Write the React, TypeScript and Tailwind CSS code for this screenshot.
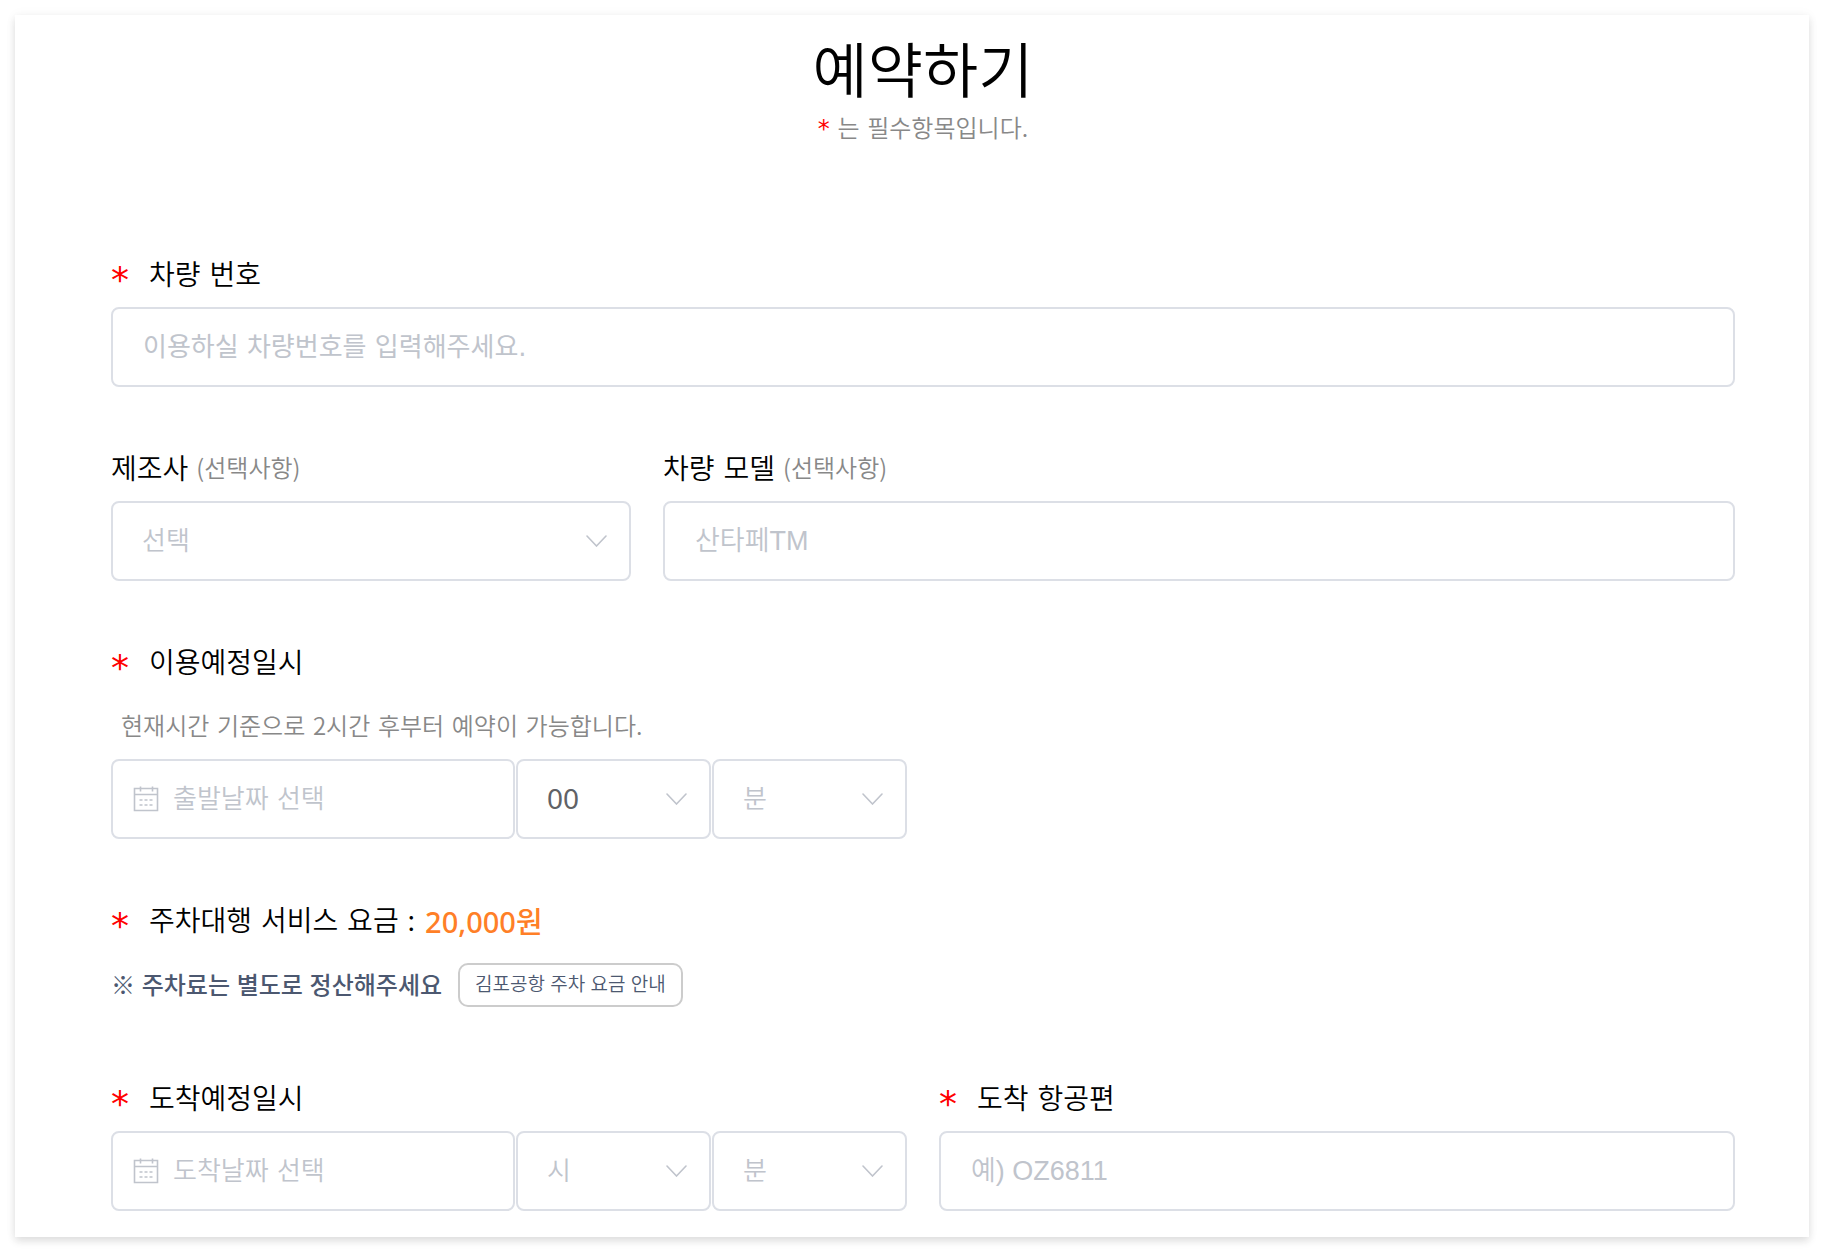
import { useState, type ReactNode } from "react";

const BOX =
  "h-20 w-full rounded-lg border-2 border-[#dcdfe6] bg-white text-[#606266] outline-none placeholder:text-[#c0c4cc] placeholder:opacity-100 focus:border-[#409eff]";

function Chevron() {
  return (
    <svg
      className="pointer-events-none absolute right-6 top-1/2 h-3 w-[21px] -translate-y-1/2"
      viewBox="0 0 21 12"
      fill="none"
      stroke="#c0c4cc"
      strokeWidth="1.6"
      strokeLinecap="round"
      aria-hidden="true"
    >
      <path d="M1 1l9.5 10L20 1" />
    </svg>
  );
}

function CalendarIcon() {
  return (
    <svg
      className="pointer-events-none absolute left-[21px] top-1/2 h-7 w-7 -translate-y-1/2"
      viewBox="0 0 28 28"
      fill="none"
      stroke="#c0c4cc"
      strokeWidth="1.6"
      aria-hidden="true"
    >
      <path d="M2.5 3.5h23v22h-23zM2.5 9.5h23" />
      <path d="M8.5 1.5v5M20.5 1.5v5" />
      <path d="M7.5 15h3M12.5 15h3M17.5 15h3M7.5 20h3M12.5 20h3M17.5 20h3" />
    </svg>
  );
}

function Star() {
  return (
    <span
      className="mr-5 h-10 w-[18px] pt-[7px] font-['DejaVu_Sans',sans-serif] text-4xl font-normal leading-10 text-[#ff0000]"
      aria-hidden="true"
    >
      *
    </span>
  );
}

function Plain({ children }: { children: ReactNode }) {
  return <span className="font-['Noto_Sans_CJK_KR',sans-serif] leading-none">{children}</span>;
}

function Label({
  htmlFor,
  required,
  hint,
  children,
}: {
  htmlFor?: string;
  required?: boolean;
  hint?: string;
  children: ReactNode;
}) {
  return (
    <label htmlFor={htmlFor} className="mb-3.5 flex h-10 items-center text-[28px] leading-10 text-black">
      {required && <Star />}
      <span className="pt-1.5">{children}</span>
      {hint && <span className="ml-2 font-['Noto_Sans_CJK_KR',sans-serif] text-2xl text-[#888888]">{hint}</span>}
    </label>
  );
}

function Select({
  id,
  label,
  placeholder,
  options,
  initial = "",
}: {
  id: string;
  label: string;
  placeholder: string;
  options: string[];
  initial?: string;
}) {
  const [value, setValue] = useState(initial);
  return (
    <div className="relative">
      <select
        id={id}
        aria-label={label}
        value={value}
        onChange={(e) => setValue(e.target.value)}
        className={`${BOX} appearance-none pb-0.5 pl-[29px] pr-14 font-['Noto_Sans','Noto_Sans_CJK_KR',sans-serif] ${
          value === "" ? "text-[26px] text-[#c0c4cc]!" : "text-[28px] font-normal"
        }`}
      >
        <option value="">{placeholder}</option>
        {options.map((o) => (
          <option key={o}>{o}</option>
        ))}
      </select>
      <Chevron />
    </div>
  );
}

const HOURS = Array.from({ length: 24 }, (_, i) => String(i).padStart(2, "0"));
const MINUTES = ["00", "10", "20", "30", "40", "50"];

function DateTime({ id, placeholder, hour }: { id: string; placeholder: string; hour?: string }) {
  return (
    <div className="grid grid-cols-[404fr_195fr_195fr] gap-px">
      <div className="relative">
        <input id={id} type="text" placeholder={placeholder} className={`${BOX} pl-[60px] pr-6 text-[26px]`} />
        <CalendarIcon />
      </div>
      <Select id={`${id}-hour`} label="시" placeholder="시" options={HOURS} initial={hour} />
      <Select id={`${id}-minute`} label="분" placeholder="분" options={MINUTES} />
    </div>
  );
}

export default function App() {
  return (
    <div className="bg-white p-[15px]">
      <main className="bg-white pb-[26px] pl-24 pr-[74px] pt-[21px] font-['DejaVu_Sans','Noto_Sans_CJK_KR',sans-serif] font-[350] shadow-[0_4px_8px_rgba(0,0,0,0.12),0_0_12px_rgba(0,0,0,0.04)]">
        <header className="mb-[104px] text-center">
          <h1 className="mb-px text-[60px] font-[350] leading-[72px] text-black">예약하기</h1>
          <p className="text-2xl leading-10 text-[#888888]">
            <span className="font-normal text-[#ff0000]">*</span> 는 필수항목입니다<Plain>.</Plain>
          </p>
        </header>

        <form className="flex flex-col gap-[60px]" onSubmit={(e) => e.preventDefault()}>
          <div>
            <Label htmlFor="plate" required>
              차량 번호
            </Label>
            <input
              id="plate"
              type="text"
              placeholder="이용하실 차량번호를 입력해주세요."
              className={`${BOX} px-[30px] text-[26px] font-normal`}
            />
          </div>

          <div className="grid grid-cols-[520fr_1072fr] gap-8">
            <div>
              <Label htmlFor="maker" hint="(선택사항)">
                제조사
              </Label>
              <Select id="maker" label="제조사" placeholder="선택" options={["현대", "기아", "쌍용", "르노삼성"]} />
            </div>
            <div>
              <Label htmlFor="model" hint="(선택사항)">
                차량 모델
              </Label>
              <input
                id="model"
                type="text"
                placeholder="산타페TM"
                className={`${BOX} px-[30px] font-['Liberation_Sans','Noto_Sans_CJK_KR',sans-serif] text-[27px]`}
              />
            </div>
          </div>

          <div>
            <Label htmlFor="departure" required>
              이용예정일시
            </Label>
            <p className="mb-3 ml-2.5 mt-[26px] text-2xl leading-10 text-[#888888]">
              현재시간 기준으로 <Plain>2</Plain>시간 후부터 예약이 가능합니다<Plain>.</Plain>
            </p>
            <div className="grid grid-cols-2 gap-8">
              <DateTime id="departure" placeholder="출발날짜 선택" hour="00" />
            </div>
          </div>

          <div className="mb-2.5">
            <div className="flex h-10 items-center text-[28px] leading-10 text-black">
              <Star />
              <span className="pt-1.5">
                주차대행 서비스 요금 <Plain>:</Plain>
              </span>
              <span className="ml-2.5 pt-1.5 font-['Noto_Sans','Noto_Sans_CJK_KR',sans-serif] text-[29px] font-medium text-[#ff7f27]">
                20,000원
              </span>
            </div>
            <div className="mt-6 flex items-center gap-4 font-['Liberation_Sans','Noto_Sans_CJK_KR',sans-serif] text-[#4c5870]">
              <p className="pt-0.5 text-2xl font-medium leading-10">※ 주차료는 별도로 정산해주세요</p>
              <button
                type="button"
                className="h-11 rounded-[10px] border-2 border-[#cccccc] px-[15px] text-[19px] leading-9"
              >
                김포공항 주차 요금 안내
              </button>
            </div>
          </div>

          <div className="grid grid-cols-2 gap-8">
            <div>
              <Label htmlFor="arrival" required>
                도착예정일시
              </Label>
              <DateTime id="arrival" placeholder="도착날짜 선택" />
            </div>
            <div>
              <Label htmlFor="flight" required>
                도착 항공편
              </Label>
              <input
                id="flight"
                type="text"
                placeholder="예) OZ6811"
                className={`${BOX} px-[30px] font-['Liberation_Sans','Noto_Sans_CJK_KR',sans-serif] text-[27px]`}
              />
            </div>
          </div>
        </form>
      </main>
    </div>
  );
}
